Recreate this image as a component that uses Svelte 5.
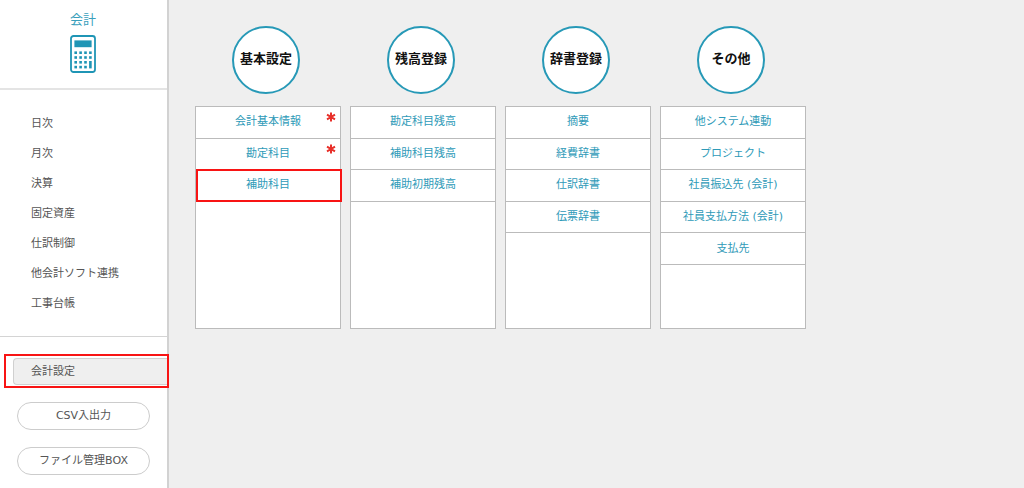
<script lang="ts">
	const menu = ['日次', '月次', '決算', '固定資産', '仕訳制御', '他会計ソフト連携', '工事台帳'];

	const groups = [
		{
			title: '基本設定',
			items: [
				{ label: '会計基本情報', required: true },
				{ label: '勘定科目', required: true },
				{ label: '補助科目', marked: true }
			]
		},
		{
			title: '残高登録',
			items: [{ label: '勘定科目残高' }, { label: '補助科目残高' }, { label: '補助初期残高' }]
		},
		{
			title: '辞書登録',
			items: [{ label: '摘要' }, { label: '経費辞書' }, { label: '仕訳辞書' }, { label: '伝票辞書' }]
		},
		{
			title: 'その他',
			items: [
				{ label: '他システム連動' },
				{ label: 'プロジェクト' },
				{ label: '社員振込先 (会計)' },
				{ label: '社員支払方法 (会計)' },
				{ label: '支払先' }
			]
		}
	];

	// calculator keys, the last column ends in a tall key
	const keys = [];
	for (let row = 0; row < 4; row++) {
		for (let col = 0; col < 4; col++) {
			if (col === 3 && row > 1) continue;
			keys.push({ x: 4.4 + col * 4.9, y: 16.4 + row * 4.8 });
		}
	}
</script>

<div class="app">
	<aside>
		<header>
			<h1>会計</h1>
			<svg width="26" height="38" viewBox="0 0 26 38" aria-hidden="true">
				<rect x="1" y="1" width="24" height="36" rx="2.5" fill="#fff" stroke="#1f95b5" stroke-width="1.8" />
				<rect x="4.4" y="5.4" width="17.2" height="6.8" fill="#1f95b5" />
				{#each keys as key}
					<rect x={key.x} y={key.y} width="2.6" height="2.6" fill="#1f95b5" />
				{/each}
				<rect x="19.1" y="26" width="2.6" height="7.4" fill="#1f95b5" />
			</svg>
		</header>

		<nav>
			<ul>
				{#each menu as item}
					<li><a href="#menu">{item}</a></li>
				{/each}
			</ul>
		</nav>

		<div class="tools">
			<a class="current" href="#settings">会計設定</a>
			<button type="button">CSV入出力</button>
			<button type="button">ファイル管理BOX</button>
		</div>
	</aside>

	<main>
		{#each groups as group}
			<section>
				<h2>{group.title}</h2>
				<ul>
					{#each group.items as item}
						<li class:marked={item.marked}>
							<a href="#item">{item.label}</a>
							{#if item.required}
								<svg class="required" width="10" height="10" viewBox="0 0 10 10" role="img" aria-label="必須">
									<path
										d="M5 0.4V9.6M1 2.7L9 7.3M9 2.7L1 7.3"
										fill="none"
										stroke="#e8302a"
										stroke-width="2"
									/>
								</svg>
							{/if}
						</li>
					{/each}
				</ul>
			</section>
		{/each}
	</main>
</div>

<style>
	:global(body) {
		margin: 0;
		background: #efefef;
	}
	.app {
		display: flex;
		min-height: 100vh;
		font-family: 'DejaVu Sans', 'Noto Sans CJK JP', sans-serif;
		font-size: 11px;
		line-height: 16px;
		color: #555;
	}
	a {
		color: inherit;
		text-decoration: none;
	}
	ul {
		list-style: none;
		margin: 0;
		padding: 0;
	}

	aside {
		box-sizing: border-box;
		flex: 0 0 169px;
		background: #fff;
		border-right: 2px solid #d2d2d2;
	}
	header {
		box-sizing: border-box;
		height: 90px;
		padding: 10px 1px 0 0;
		display: flex;
		flex-direction: column;
		align-items: center;
		gap: 5px;
		border-bottom: 2px solid #e4e4e4;
	}
	h1 {
		margin: 0;
		font-size: 13px;
		line-height: 20px;
		font-weight: 400;
		color: #3a9fbc;
	}
	nav {
		padding: 19px 0 17px;
		border-bottom: 1px solid #d4d4d4;
	}
	nav a {
		display: block;
		padding-left: 31px;
		line-height: 30px;
	}

	.tools {
		display: flex;
		flex-direction: column;
		gap: 17px;
		padding: 21px 0 13px;
	}
	.current {
		position: relative;
		margin-left: 13px;
		padding-left: 17px;
		line-height: 25px;
		background: #efefef;
		border: 1px solid #d0d0d0;
		border-right: 0;
		border-radius: 4px 0 0 4px;
	}
	.current::after {
		content: '';
		position: absolute;
		inset: -5px -2px -4px -10px;
		border: 2px solid #f81414;
	}
	button {
		height: 28px;
		margin: 0 17px;
		padding: 0;
		font: inherit;
		color: inherit;
		background: #fff;
		border: 1px solid #ccc;
		border-radius: 14px;
	}

	main {
		flex: 1;
		display: flex;
		align-items: flex-start;
		gap: 9px;
		padding: 26px;
	}
	section {
		flex: 0 0 146px;
		display: flex;
		flex-direction: column;
		gap: 12px;
	}
	h2 {
		box-sizing: border-box;
		width: 68px;
		height: 68px;
		margin: 0 0 0 37px;
		padding-bottom: 2px;
		display: flex;
		align-items: center;
		justify-content: center;
		white-space: nowrap;
		font-size: 13px;
		font-weight: 700;
		color: #111;
		background: #fff;
		border: 2px solid #2799b7;
		border-radius: 50%;
	}
	section ul {
		box-sizing: border-box;
		height: 223px;
		display: grid;
		grid-template-rows: repeat(7, 1fr);
		background: #fff;
		border: 1px solid #bbb;
	}
	section li {
		position: relative;
		display: grid;
		border-bottom: 1px solid #bbb;
	}
	section a {
		display: flex;
		align-items: center;
		justify-content: center;
		color: #2e9ab8;
	}
	.required {
		position: absolute;
		top: 5px;
		right: 4px;
	}
	.marked::after {
		content: '';
		position: absolute;
		inset: -1px -2px -1px 0;
		border: 2px solid #f81414;
		pointer-events: none;
	}
</style>
